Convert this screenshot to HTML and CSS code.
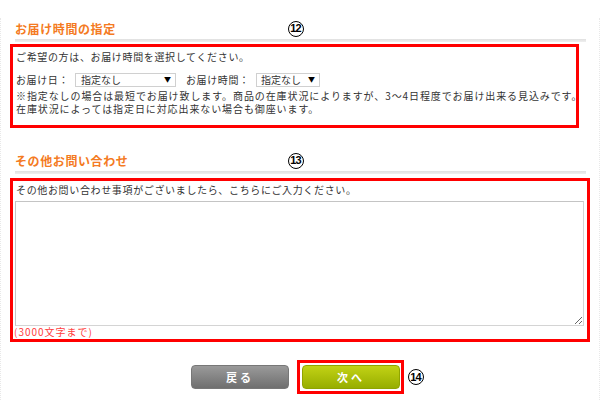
FILE: index.html
```html
<!DOCTYPE html>
<html lang="ja">
<head>
  <meta charset="UTF-8">
  <title>お届け時間の指定</title>
  <link rel="stylesheet" href="styles.css">
</head>
<body>
  <div class="page">
    <div class="sec-head first">
      <h2>お届け時間の指定</h2>
      <span class="num">12</span>
    </div>
    <div class="bar"></div>
    <div class="box box-time">
      <p class="lead">ご希望の方は、お届け時間を選択してください。</p>
      <div class="time-row">
        <span class="label label-day">お届け日：</span>
        <span class="sel sel-day">
          <select><option>指定なし</option></select>
          <span class="arrow">▼</span>
        </span>
        <span class="label label-time">お届け時間：</span>
        <span class="sel sel-time">
          <select><option>指定なし</option></select>
          <span class="arrow">▼</span>
        </span>
      </div>
      <p class="note">※指定なしの場合は最短でお届け致します。商品の在庫状況によりますが、3～4日程度でお届け出来る見込みです。<br>在庫状況によっては指定日に対応出来ない場合も御座います。</p>
    </div>

    <div class="sec-head second">
      <h2>その他お問い合わせ</h2>
      <span class="num">13</span>
    </div>
    <div class="bar"></div>
    <div class="box box-msg">
      <p class="lead">その他お問い合わせ事項がございましたら、こちらにご入力ください。</p>
      <textarea></textarea>
      <p class="limit">(3000文字まで)</p>
    </div>

    <div class="buttons">
      <button class="btn btn-back">戻る</button>
      <div class="next-wrap">
        <button class="btn btn-next">次へ</button>
      </div>
      <span class="num">14</span>
    </div>
  </div>
</body>
</html>
```

FILE: styles.css
```css
* {
  margin: 0;
  padding: 0;
  box-sizing: border-box;
}

body {
  background: #fff;
  color: #333;
  font-family: "Noto Sans CJK JP", "Liberation Sans", sans-serif;
  font-size: 10px;
}

.page {
  width: 600px;
  height: 400px;
  border-left: 1px dotted #e8e8e8;
  border-right: 1px dotted #e8e8e8;
  padding-left: 9px;
}

.sec-head {
  display: grid;
  grid-template-columns: 273px auto;
  align-items: center;
  height: 21px;
  margin-left: 5px;
}

.sec-head.first {
  margin-top: 18px;
}

.sec-head.second {
  margin-top: 22px;
}

.sec-head h2 {
  color: #f47a22;
  font-size: 12px;
  font-weight: bold;
  letter-spacing: 0.6px;
  line-height: 16px;
}

/* circled annotation numbers */
.num {
  display: inline-flex;
  align-items: center;
  justify-content: center;
  width: 16px;
  height: 16px;
  border: 1.5px solid #000;
  border-radius: 50%;
  background: #fff;
  color: #000;
  font-family: "Liberation Sans", sans-serif;
  font-size: 11px;
  font-weight: bold;
  letter-spacing: -0.8px;
  line-height: 1;
  padding-right: 1px;
}

.bar {
  width: 571px;
  height: 3px;
  margin-left: 5px;
  background: linear-gradient(#e0e0e0, #efefef);
}

.box {
  border: 3px solid #f00;
  padding-left: 3px;
}

.box-time {
  width: 569px;
  height: 84px;
  margin-top: 2px;
  padding-top: 3px;
}

.lead {
  line-height: 14px;
  letter-spacing: 0.65px;
  white-space: nowrap;
}

.time-row {
  display: flex;
  align-items: center;
  height: 14px;
  margin-top: 8px;
  margin-bottom: 3px;
}

.label {
  letter-spacing: 0.6px;
  white-space: nowrap;
}

.label-day {
  width: 59px;
}

.label-time {
  width: 70px;
  margin-left: 10px;
}

.sel {
  position: relative;
  display: block;
  height: 14px;
}

.sel-day {
  width: 101px;
}

.sel-time {
  width: 64px;
}

.sel select {
  appearance: none;
  -webkit-appearance: none;
  width: 100%;
  height: 14px;
  border: 1px solid #d0d0d0;
  border-radius: 0;
  background: #fff;
  color: #333;
  font-family: "Noto Sans CJK JP", sans-serif;
  font-size: 10px;
  line-height: 12px;
  padding: 0 0 0 5px;
}

.sel-time select {
  padding-left: 4px;
}

.arrow {
  position: absolute;
  right: 5px;
  top: 1px;
  font-size: 7px;
  line-height: 12px;
  color: #000;
}

.note {
  line-height: 13px;
  letter-spacing: 0.9px;
  white-space: nowrap;
}

.box-msg {
  width: 580px;
  height: 164px;
  margin-top: 4px;
  padding-top: 2px;
  padding-left: 3px;
}

.box-msg textarea {
  display: block;
  width: 569px;
  height: 125px;
  margin-top: 4px;
  margin-left: -1px;
  border: 1px solid #d4d4d4;
  border-top-color: #c4c4c4;
  border-left-color: #c4c4c4;
  background: #fff;
  resize: both;
}

.limit {
  color: #ff3d3d;
  line-height: 12px;
  margin-left: -2px;
  letter-spacing: 1px;
}

.buttons {
  display: flex;
  align-items: center;
  margin-top: 18px;
  margin-left: 181px;
}

.btn {
  width: 98px;
  height: 24px;
  border: none;
  border-radius: 4px;
  color: #fff;
  font-family: "Noto Sans CJK JP", sans-serif;
  font-size: 11px;
  font-weight: bold;
  letter-spacing: 3px;
  cursor: pointer;
}

.btn-back {
  background: linear-gradient(#9a9a9a, #6f6f6f);
  border: 1px solid #777;
}

.next-wrap {
  border: 3px solid #f00;
  padding: 2px 1px 2px 2px;
  margin-left: 8px;
}

.btn-next {
  display: block;
  width: 98px;
  background: linear-gradient(#c2d215, #97ae00);
  border: 1px solid #90a400;
}

.buttons .num {
  margin-left: 4px;
}
```
